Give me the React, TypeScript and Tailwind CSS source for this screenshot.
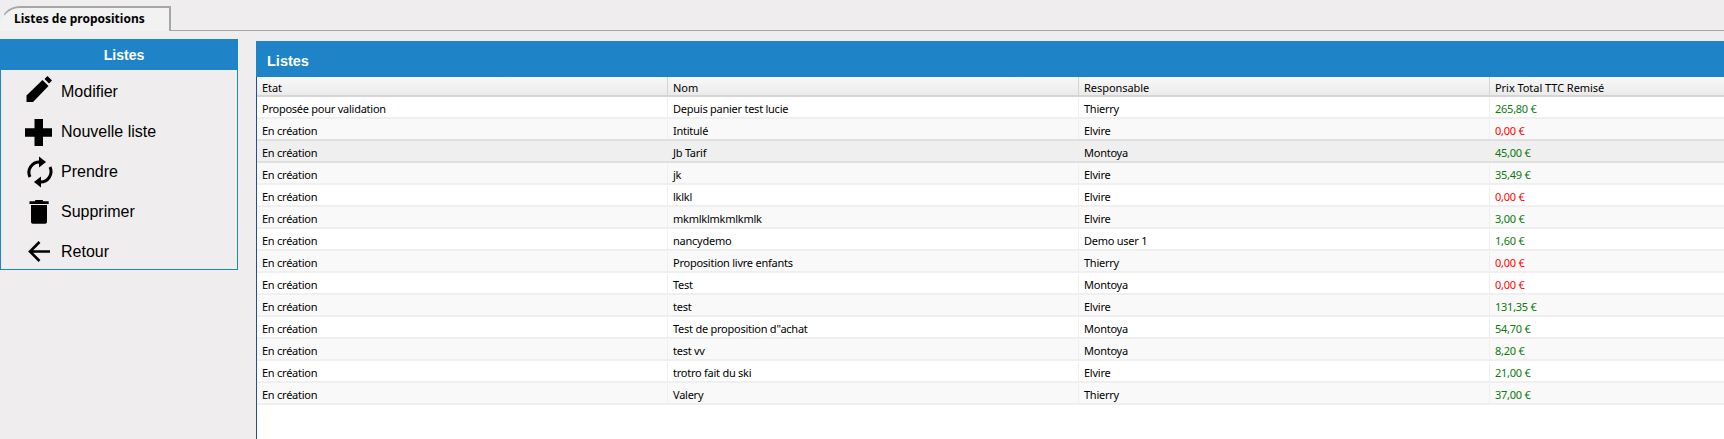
import React from 'react';

const Icon: React.FC<{ children: React.ReactNode }> = ({ children }) => (
  <svg width="40" height="40" viewBox="0 0 40 40" fill="#000">
    {children}
  </svg>
);

const actions = [
  {
    label: 'Modifier',
    icon: (
      <Icon>
        <path d="M6.5 30v-6.500L22.500 8l6 6L13 30z" />
        <path d="M24.500 7l3-3 4.500 4.500-3 3z" />
      </Icon>
    ),
  },
  {
    label: 'Nouvelle liste',
    icon: (
      <Icon>
        <path d="M14.500 7H23v9.300h9v8.400h-9V34h-8.500v-9.300H5v-8.400h9.500z" />
      </Icon>
    ),
  },
  {
    label: 'Prendre',
    icon: (
      <Icon>
        <path d="M10 25A10.500 10.500 0 0 1 20 10" fill="none" stroke="#000" strokeWidth="3" />
        <path d="M19 4.500 26 10l-7 5.500z" />
        <path d="M30 15A10.500 10.500 0 0 1 20 30" fill="none" stroke="#000" strokeWidth="3" />
        <path d="M21 24.500 14 30l7 5.500z" />
      </Icon>
    ),
  },
  {
    label: 'Supprimer',
    icon: (
      <Icon>
        <path d="M15.500 8h7l.8 1.200h5.400V12H9.500V9.200h5.200z" />
        <path d="M11 13h16v17a1.800 1.800 0 0 1-1.800 1.800H12.800A1.800 1.800 0 0 1 11 30z" />
      </Icon>
    ),
  },
  {
    label: 'Retour',
    icon: (
      <Icon>
        <path d="M30 19.500H11M19.500 10l-9.500 9.500 9.500 9.500" fill="none" stroke="#000" strokeWidth="2.600" />
      </Icon>
    ),
  },
];

const rows = [
  ['Proposée pour validation', 'Depuis panier test lucie', 'Thierry', '265,80 €'],
  ['En création', 'Intitulé', 'Elvire', '0,00 €'],
  ['En création', 'Jb Tarif', 'Montoya', '45,00 €'],
  ['En création', 'jk', 'Elvire', '35,49 €'],
  ['En création', 'lklkl', 'Elvire', '0,00 €'],
  ['En création', 'mkmlklmkmlkmlk', 'Elvire', '3,00 €'],
  ['En création', 'nancydemo', 'Demo user 1', '1,60 €'],
  ['En création', 'Proposition livre enfants', 'Thierry', '0,00 €'],
  ['En création', 'Test', 'Montoya', '0,00 €'],
  ['En création', 'test', 'Elvire', '131,35 €'],
  ['En création', "Test de proposition d''achat", 'Montoya', '54,70 €'],
  ['En création', 'test vv', 'Montoya', '8,20 €'],
  ['En création', 'trotro fait du ski', 'Elvire', '21,00 €'],
  ['En création', 'Valery', 'Thierry', '37,00 €'],
];

const cols = ['w-[411px]', 'w-[411px]', 'w-[411px]', 'flex-1'];
const headers = ['Etat', 'Nom', 'Responsable', 'Prix Total TTC Remisé'];

const App: React.FC = () => {
  return (
    <div className="h-[439px] w-[1724px] overflow-hidden bg-[#efeded] font-['Liberation_Sans',sans-serif] text-black">
      <div className="h-[31px] border-b border-[#a6a6a6] pt-[6px]">
        <div className="h-[25px] w-[171px] rounded-tl-[20px] border-t-2 border-r-2 border-l border-[#a6a6a6] border-l-transparent bg-[#f2f2f2] pl-[13px] text-[12px] leading-[22px] font-bold font-['Noto_Sans',sans-serif]">
          Listes de propositions
        </div>
      </div>
      <div className="flex items-start pt-[8px]">
        <div className="h-[231px] w-[238px] border-x border-b border-[#1e83c7]">
          <div className="-mx-px h-[31px] bg-[#1e83c7] pl-[10px] text-center text-[14px] leading-[33px] font-bold text-white">
            Listes
          </div>
          <div className="pt-[2px]">
            {actions.map((a) => (
              <div className="flex h-[40px] items-center" key={a.label}>
                <div className="w-[60px] pl-[19px]">{a.icon}</div>
                <span className="text-[16px]">{a.label}</span>
              </div>
            ))}
          </div>
        </div>
        <div className="mt-[2px] ml-[18px] h-[398px] flex-1 border-l border-[#1f4fa0] bg-white">
          <div className="-ml-px h-[36px] bg-[#1e83c7] pl-[11px] text-[14.5px] leading-[40px] font-bold text-white">
            Listes
          </div>
          <div className="flex h-[20px] border-b-2 border-[#d5d5d5] bg-gradient-to-b from-[#f8f8f8] to-[#ebebeb] font-['Noto_Sans',sans-serif] text-[11px] leading-[22px] tracking-[-0.05px]">
            {headers.map((h, i) => (
              <div className={`${cols[i]} border-r border-[#d5d5d5] pl-[5px] last:border-r-0`} key={h}>
                {h}
              </div>
            ))}
          </div>
          {rows.map((r, i) => (
            <div
              className={`flex h-[22px] border-b-2 pt-[1px] font-['Noto_Sans',sans-serif] text-[11px] leading-[22px] tracking-[-0.25px] ${
                i === 2
                  ? 'border-[#e0e0e0] bg-[#efefef]'
                  : i === 1
                    ? 'border-[#e0e0e0] bg-[#f9f9f9]'
                    : i % 2 === 0
                      ? 'border-[#efefef] bg-white'
                      : 'border-[#efefef] bg-[#f9f9f9]'
              }`}
              key={i}
            >
              {r.map((c, j) => (
                <div
                  className={`${cols[j]} border-r border-[#efefef] pl-[5px] last:border-r-0 ${
                    j === 3 ? (c.startsWith('0,00') ? 'text-[#ff0000]' : 'text-[#0a7a0a]') : ''
                  }`}
                  key={j}
                >
                  {c}
                </div>
              ))}
            </div>
          ))}
        </div>
      </div>
    </div>
  );
};

export default App;
